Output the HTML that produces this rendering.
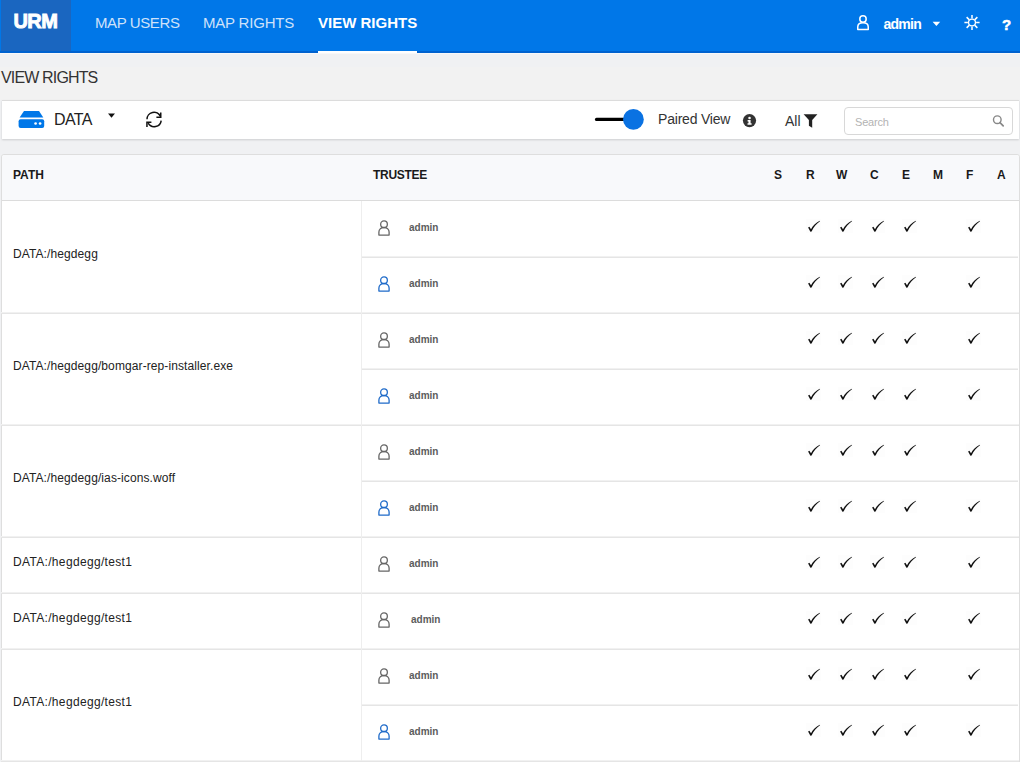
<!DOCTYPE html>
<html><head><meta charset="utf-8">
<style>
*{box-sizing:border-box;margin:0;padding:0}
html,body{width:1020px;height:762px;overflow:hidden;background:#f0f1f3;font-family:"Liberation Sans",sans-serif;position:relative}
.a{position:absolute;white-space:nowrap}
svg.a{overflow:visible}
#hdr{position:absolute;left:0;top:0;width:1020px;height:53px;background:#0077e8;border-bottom:2px solid #0062cf}
#logo{position:absolute;left:1px;top:0;width:70px;height:51px;background:#1a66c0}
.nav{font-size:15px;line-height:15px;color:#cfe2fa;letter-spacing:-0.4px}
.navA{font-size:15px;line-height:15px;color:#fff;font-weight:700}
#toolbar{position:absolute;left:2px;top:100px;width:1017px;height:39px;background:#fff;border-top:1px solid #dcdcdc;box-shadow:0 1px 2px rgba(0,0,0,0.15)}
#table{position:absolute;left:1px;top:154px;width:1019px;height:620px;background:#fff;border:1px solid #dedede;border-radius:3px}
#thead{position:absolute;left:0;top:0;width:1017px;height:46px;background:#f8f9fb;border-bottom:1px solid #dcdcdc;border-radius:3px 3px 0 0}
.th{font-size:12px;line-height:12px;font-weight:700;color:#1a1a1a}
.path{font-size:12px;line-height:12px;color:#222;letter-spacing:0.1px}
.adm{font-size:10px;line-height:10px;font-weight:700;color:#5c5c5c}
.hl{position:absolute;height:2px;margin-top:-1px;background:linear-gradient(#f1f1f1 50%,#e5e5e5 50%)}
.vl{position:absolute;width:1px;background:#eeeeee}
</style></head><body>
<div class="a" style="left:0;top:67px;width:1020px;height:33px;background:#f2f2f2"></div>
<div class="a" style="left:0;top:53px;width:1020px;height:1px;background:#f8f8f9"></div>
<div id="hdr"></div>
<div id="logo"></div>
<div class="a" style="left:13.5px;top:11px;font-size:20px;line-height:20px;font-weight:700;color:#fff;-webkit-text-stroke:0.9px #fff;letter-spacing:-0.6px">URM</div>
<div class="a nav" style="left:95px;top:15px;font-size:15px;letter-spacing:-0.4px">MAP USERS</div>
<div class="a nav" style="left:203px;top:15px;font-size:15px;letter-spacing:-0.2px">MAP RIGHTS</div>
<div class="a navA" style="left:318px;top:15px">VIEW RIGHTS</div>
<div class="a" style="left:318px;top:51px;width:99px;height:2px;background:#fff"></div>

<svg class="a" style="left:855px;top:13px" width="16" height="19" viewBox="0 0 16 19">
 <circle cx="8" cy="6" r="3.2" fill="none" stroke="#fff" stroke-width="1.5"/>
 <path d="M2.75,16.5 V14 C2.75,11.4 5,9.85 8,9.85 C11,9.85 13.25,11.4 13.25,14 V16.5 Z" fill="none" stroke="#fff" stroke-width="1.5" stroke-linejoin="round"/>
</svg>
<div class="a" style="left:883.5px;top:17px;font-size:14px;line-height:14px;font-weight:700;color:#fff;letter-spacing:-0.75px">admin</div>
<svg class="a" style="left:932px;top:21px" width="9" height="6" viewBox="0 0 9 6"><path d="M0.6,0.8 H8.2 L4.4,4.9 Z" fill="#fff"/></svg>
<svg class="a" style="left:962px;top:13px" width="20" height="20" viewBox="0 0 20 20">
 <circle cx="10" cy="9.5" r="3.45" fill="none" stroke="#fff" stroke-width="1.3"/>
 <g stroke="#fff" stroke-width="1.5" stroke-linecap="butt">
  <path d="M10,1.9 V5.4 M10,13.6 V17.1 M2.4,9.5 H5.9 M14.1,9.5 H17.6 M4.63,4.13 L7.1,6.6 M12.9,12.4 L15.37,14.87 M4.63,14.87 L7.1,12.4 M12.9,6.6 L15.37,4.13"/>
 </g>
</svg>
<div class="a" style="left:1002px;top:16.5px;font-size:15px;line-height:15px;font-weight:700;color:#fff;-webkit-text-stroke:0.5px #fff">?</div>

<div class="a" style="left:1px;top:69.5px;font-size:16px;line-height:16px;color:#333;letter-spacing:-0.85px">VIEW RIGHTS</div>

<div id="toolbar"></div>
<svg class="a" style="left:18px;top:110px" width="28" height="19" viewBox="0 0 28 19">
 <path d="M6,0.9 H21 L25.3,7.6 H1.6 Z" fill="#0077e8"/>
 <rect x="0.6" y="9.2" width="25.6" height="8.7" rx="2" fill="#0077e8"/>
 <circle cx="17.6" cy="13.5" r="1.35" fill="#fff"/>
 <circle cx="22.1" cy="13.5" r="1.35" fill="#fff"/>
</svg>
<div class="a" style="left:54px;top:112px;font-size:16px;line-height:16px;color:#222;letter-spacing:-0.65px">DATA</div>
<svg class="a" style="left:107px;top:113px" width="9" height="6" viewBox="0 0 9 6"><path d="M1,0.5 H8 L4.5,4.7 Z" fill="#111"/></svg>
<svg class="a" style="left:144px;top:110px" width="20" height="20" viewBox="0 0 20 20">
 <g fill="none" stroke="#111" stroke-width="1.5">
  <path d="M3,9.3 A7,7 0 0 1 16.4,6.4"/>
  <path d="M17.2,10.6 A7,7 0 0 1 4.2,13.2"/>
 </g>
 <path d="M16,2.5 H17.5 V8 H12.4 V6.6 H16 Z" fill="#111"/>
 <path d="M2.2,11.5 H7.4 V12.9 H3.7 V17 H2.2 Z" fill="#111"/>
</svg>

<svg class="a" style="left:590px;top:105px" width="60" height="30" viewBox="0 0 60 30">
 <path d="M6.5,14.4 H35" stroke="#000" stroke-width="3.2" stroke-linecap="round"/>
 <circle cx="43.4" cy="14.4" r="10.4" fill="#0a72e2"/>
</svg>
<div class="a" style="left:658px;top:112px;font-size:14px;line-height:14px;color:#333;letter-spacing:-0.2px">Paired View</div>
<svg class="a" style="left:742px;top:113px" width="15" height="15" viewBox="0 0 15 15">
 <circle cx="7.5" cy="7.6" r="6.6" fill="#333"/>
 <circle cx="7.55" cy="5.0" r="1.3" fill="#fff"/>
 <path d="M5.6,7.1 H8.6 V10.3 H9.6 V11.8 H5.5 V10.3 H6.5 V8.4 H5.6 Z" fill="#fff"/>
</svg>
<div class="a" style="left:785px;top:114px;font-size:14px;line-height:14px;color:#333">All</div>
<svg class="a" style="left:802px;top:113px" width="17" height="16" viewBox="0 0 17 16">
 <path d="M1.6,1.2 H15.4 L10.2,6.9 V14.7 L6.9,12.7 V6.9 Z" fill="#222"/>
</svg>
<div class="a" style="left:844px;top:107px;width:169px;height:28px;border:1px solid #d8d8d8;border-radius:4px;background:#fff"></div>
<div class="a" style="left:855px;top:117px;font-size:11px;line-height:11px;color:#b3b3b3;letter-spacing:-0.2px">Search</div>
<svg class="a" style="left:990px;top:113px" width="16" height="16" viewBox="0 0 16 16">
 <circle cx="7.3" cy="6.7" r="3.8" fill="none" stroke="#888" stroke-width="1.4"/>
 <path d="M10,9.6 L13.2,12.8" stroke="#888" stroke-width="1.7" stroke-linecap="round"/>
</svg>

<div id="table">
  <div id="thead"></div>
</div>
<div class="a th" style="left:13px;top:169px">PATH</div>
<div class="a th" style="left:373px;top:169px;letter-spacing:-0.3px">TRUSTEE</div>
<div class="a th" style="left:774px;top:169px">S</div>
<div class="a th" style="left:806px;top:169px">R</div>
<div class="a th" style="left:836px;top:169px">W</div>
<div class="a th" style="left:870px;top:169px">C</div>
<div class="a th" style="left:902px;top:169px">E</div>
<div class="a th" style="left:933px;top:169px">M</div>
<div class="a th" style="left:966px;top:169px">F</div>
<div class="a th" style="left:997px;top:169px">A</div>

<div class="a path" style="left:13px;top:248px">DATA:/hegdegg</div>
<svg class="a" style="left:377px;top:219px" width="14" height="18" viewBox="0 0 14 18"><circle cx="7" cy="5.3" r="3.35" fill="none" stroke="#666" stroke-width="1.3"/><path d="M1.9,16.1 V13.1 C1.9,10.4 4.2,8.5 7,8.5 C9.8,8.5 12.1,10.4 12.1,13.1 V16.1 Z" fill="none" stroke="#666" stroke-width="1.3" stroke-linejoin="round"/></svg>
<div class="a adm" style="left:409px;top:223px">admin</div>
<svg class="a" style="left:804.0px;top:217.3px" width="20" height="19" viewBox="0 0 20 19"><rect x="2" y="2" width="15" height="14" fill="#fdfdfd"/><path d="M4.1,10.4 L5.4,9.7 L7.0,12.3 C8.6,8.8 11.8,5.6 15.7,3.7 L16.0,4.3 C12.7,6.5 9.6,10.0 7.6,14.5 L6.4,14.7 Z" fill="#111"/></svg>
<svg class="a" style="left:836.0px;top:217.3px" width="20" height="19" viewBox="0 0 20 19"><rect x="2" y="2" width="15" height="14" fill="#fdfdfd"/><path d="M4.1,10.4 L5.4,9.7 L7.0,12.3 C8.6,8.8 11.8,5.6 15.7,3.7 L16.0,4.3 C12.7,6.5 9.6,10.0 7.6,14.5 L6.4,14.7 Z" fill="#111"/></svg>
<svg class="a" style="left:868.0px;top:217.3px" width="20" height="19" viewBox="0 0 20 19"><rect x="2" y="2" width="15" height="14" fill="#fdfdfd"/><path d="M4.1,10.4 L5.4,9.7 L7.0,12.3 C8.6,8.8 11.8,5.6 15.7,3.7 L16.0,4.3 C12.7,6.5 9.6,10.0 7.6,14.5 L6.4,14.7 Z" fill="#111"/></svg>
<svg class="a" style="left:900.0px;top:217.3px" width="20" height="19" viewBox="0 0 20 19"><rect x="2" y="2" width="15" height="14" fill="#fdfdfd"/><path d="M4.1,10.4 L5.4,9.7 L7.0,12.3 C8.6,8.8 11.8,5.6 15.7,3.7 L16.0,4.3 C12.7,6.5 9.6,10.0 7.6,14.5 L6.4,14.7 Z" fill="#111"/></svg>
<svg class="a" style="left:964.0px;top:217.3px" width="20" height="19" viewBox="0 0 20 19"><rect x="2" y="2" width="15" height="14" fill="#fdfdfd"/><path d="M4.1,10.4 L5.4,9.7 L7.0,12.3 C8.6,8.8 11.8,5.6 15.7,3.7 L16.0,4.3 C12.7,6.5 9.6,10.0 7.6,14.5 L6.4,14.7 Z" fill="#111"/></svg>
<div class="hl" style="left:362px;top:257px;width:656px"></div>
<svg class="a" style="left:377px;top:275px" width="14" height="18" viewBox="0 0 14 18"><circle cx="7" cy="5.3" r="3.35" fill="none" stroke="#1f6bc9" stroke-width="1.3"/><path d="M1.9,16.1 V13.1 C1.9,10.4 4.2,8.5 7,8.5 C9.8,8.5 12.1,10.4 12.1,13.1 V16.1 Z" fill="none" stroke="#1f6bc9" stroke-width="1.3" stroke-linejoin="round"/></svg>
<div class="a adm" style="left:409px;top:279px">admin</div>
<svg class="a" style="left:804.0px;top:273.3px" width="20" height="19" viewBox="0 0 20 19"><rect x="2" y="2" width="15" height="14" fill="#fdfdfd"/><path d="M4.1,10.4 L5.4,9.7 L7.0,12.3 C8.6,8.8 11.8,5.6 15.7,3.7 L16.0,4.3 C12.7,6.5 9.6,10.0 7.6,14.5 L6.4,14.7 Z" fill="#111"/></svg>
<svg class="a" style="left:836.0px;top:273.3px" width="20" height="19" viewBox="0 0 20 19"><rect x="2" y="2" width="15" height="14" fill="#fdfdfd"/><path d="M4.1,10.4 L5.4,9.7 L7.0,12.3 C8.6,8.8 11.8,5.6 15.7,3.7 L16.0,4.3 C12.7,6.5 9.6,10.0 7.6,14.5 L6.4,14.7 Z" fill="#111"/></svg>
<svg class="a" style="left:868.0px;top:273.3px" width="20" height="19" viewBox="0 0 20 19"><rect x="2" y="2" width="15" height="14" fill="#fdfdfd"/><path d="M4.1,10.4 L5.4,9.7 L7.0,12.3 C8.6,8.8 11.8,5.6 15.7,3.7 L16.0,4.3 C12.7,6.5 9.6,10.0 7.6,14.5 L6.4,14.7 Z" fill="#111"/></svg>
<svg class="a" style="left:900.0px;top:273.3px" width="20" height="19" viewBox="0 0 20 19"><rect x="2" y="2" width="15" height="14" fill="#fdfdfd"/><path d="M4.1,10.4 L5.4,9.7 L7.0,12.3 C8.6,8.8 11.8,5.6 15.7,3.7 L16.0,4.3 C12.7,6.5 9.6,10.0 7.6,14.5 L6.4,14.7 Z" fill="#111"/></svg>
<svg class="a" style="left:964.0px;top:273.3px" width="20" height="19" viewBox="0 0 20 19"><rect x="2" y="2" width="15" height="14" fill="#fdfdfd"/><path d="M4.1,10.4 L5.4,9.7 L7.0,12.3 C8.6,8.8 11.8,5.6 15.7,3.7 L16.0,4.3 C12.7,6.5 9.6,10.0 7.6,14.5 L6.4,14.7 Z" fill="#111"/></svg>
<div class="hl" style="left:1px;top:313px;width:1018px"></div>
<div class="vl" style="left:361px;top:201px;height:112px"></div>
<div class="a path" style="left:13px;top:360px">DATA:/hegdegg/bomgar-rep-installer.exe</div>
<svg class="a" style="left:377px;top:331px" width="14" height="18" viewBox="0 0 14 18"><circle cx="7" cy="5.3" r="3.35" fill="none" stroke="#666" stroke-width="1.3"/><path d="M1.9,16.1 V13.1 C1.9,10.4 4.2,8.5 7,8.5 C9.8,8.5 12.1,10.4 12.1,13.1 V16.1 Z" fill="none" stroke="#666" stroke-width="1.3" stroke-linejoin="round"/></svg>
<div class="a adm" style="left:409px;top:335px">admin</div>
<svg class="a" style="left:804.0px;top:329.3px" width="20" height="19" viewBox="0 0 20 19"><rect x="2" y="2" width="15" height="14" fill="#fdfdfd"/><path d="M4.1,10.4 L5.4,9.7 L7.0,12.3 C8.6,8.8 11.8,5.6 15.7,3.7 L16.0,4.3 C12.7,6.5 9.6,10.0 7.6,14.5 L6.4,14.7 Z" fill="#111"/></svg>
<svg class="a" style="left:836.0px;top:329.3px" width="20" height="19" viewBox="0 0 20 19"><rect x="2" y="2" width="15" height="14" fill="#fdfdfd"/><path d="M4.1,10.4 L5.4,9.7 L7.0,12.3 C8.6,8.8 11.8,5.6 15.7,3.7 L16.0,4.3 C12.7,6.5 9.6,10.0 7.6,14.5 L6.4,14.7 Z" fill="#111"/></svg>
<svg class="a" style="left:868.0px;top:329.3px" width="20" height="19" viewBox="0 0 20 19"><rect x="2" y="2" width="15" height="14" fill="#fdfdfd"/><path d="M4.1,10.4 L5.4,9.7 L7.0,12.3 C8.6,8.8 11.8,5.6 15.7,3.7 L16.0,4.3 C12.7,6.5 9.6,10.0 7.6,14.5 L6.4,14.7 Z" fill="#111"/></svg>
<svg class="a" style="left:900.0px;top:329.3px" width="20" height="19" viewBox="0 0 20 19"><rect x="2" y="2" width="15" height="14" fill="#fdfdfd"/><path d="M4.1,10.4 L5.4,9.7 L7.0,12.3 C8.6,8.8 11.8,5.6 15.7,3.7 L16.0,4.3 C12.7,6.5 9.6,10.0 7.6,14.5 L6.4,14.7 Z" fill="#111"/></svg>
<svg class="a" style="left:964.0px;top:329.3px" width="20" height="19" viewBox="0 0 20 19"><rect x="2" y="2" width="15" height="14" fill="#fdfdfd"/><path d="M4.1,10.4 L5.4,9.7 L7.0,12.3 C8.6,8.8 11.8,5.6 15.7,3.7 L16.0,4.3 C12.7,6.5 9.6,10.0 7.6,14.5 L6.4,14.7 Z" fill="#111"/></svg>
<div class="hl" style="left:362px;top:369px;width:656px"></div>
<svg class="a" style="left:377px;top:387px" width="14" height="18" viewBox="0 0 14 18"><circle cx="7" cy="5.3" r="3.35" fill="none" stroke="#1f6bc9" stroke-width="1.3"/><path d="M1.9,16.1 V13.1 C1.9,10.4 4.2,8.5 7,8.5 C9.8,8.5 12.1,10.4 12.1,13.1 V16.1 Z" fill="none" stroke="#1f6bc9" stroke-width="1.3" stroke-linejoin="round"/></svg>
<div class="a adm" style="left:409px;top:391px">admin</div>
<svg class="a" style="left:804.0px;top:385.3px" width="20" height="19" viewBox="0 0 20 19"><rect x="2" y="2" width="15" height="14" fill="#fdfdfd"/><path d="M4.1,10.4 L5.4,9.7 L7.0,12.3 C8.6,8.8 11.8,5.6 15.7,3.7 L16.0,4.3 C12.7,6.5 9.6,10.0 7.6,14.5 L6.4,14.7 Z" fill="#111"/></svg>
<svg class="a" style="left:836.0px;top:385.3px" width="20" height="19" viewBox="0 0 20 19"><rect x="2" y="2" width="15" height="14" fill="#fdfdfd"/><path d="M4.1,10.4 L5.4,9.7 L7.0,12.3 C8.6,8.8 11.8,5.6 15.7,3.7 L16.0,4.3 C12.7,6.5 9.6,10.0 7.6,14.5 L6.4,14.7 Z" fill="#111"/></svg>
<svg class="a" style="left:868.0px;top:385.3px" width="20" height="19" viewBox="0 0 20 19"><rect x="2" y="2" width="15" height="14" fill="#fdfdfd"/><path d="M4.1,10.4 L5.4,9.7 L7.0,12.3 C8.6,8.8 11.8,5.6 15.7,3.7 L16.0,4.3 C12.7,6.5 9.6,10.0 7.6,14.5 L6.4,14.7 Z" fill="#111"/></svg>
<svg class="a" style="left:900.0px;top:385.3px" width="20" height="19" viewBox="0 0 20 19"><rect x="2" y="2" width="15" height="14" fill="#fdfdfd"/><path d="M4.1,10.4 L5.4,9.7 L7.0,12.3 C8.6,8.8 11.8,5.6 15.7,3.7 L16.0,4.3 C12.7,6.5 9.6,10.0 7.6,14.5 L6.4,14.7 Z" fill="#111"/></svg>
<svg class="a" style="left:964.0px;top:385.3px" width="20" height="19" viewBox="0 0 20 19"><rect x="2" y="2" width="15" height="14" fill="#fdfdfd"/><path d="M4.1,10.4 L5.4,9.7 L7.0,12.3 C8.6,8.8 11.8,5.6 15.7,3.7 L16.0,4.3 C12.7,6.5 9.6,10.0 7.6,14.5 L6.4,14.7 Z" fill="#111"/></svg>
<div class="hl" style="left:1px;top:425px;width:1018px"></div>
<div class="vl" style="left:361px;top:313px;height:112px"></div>
<div class="a path" style="left:13px;top:472px;letter-spacing:0.1px">DATA:/hegdegg/ias-icons.woff</div>
<svg class="a" style="left:377px;top:443px" width="14" height="18" viewBox="0 0 14 18"><circle cx="7" cy="5.3" r="3.35" fill="none" stroke="#666" stroke-width="1.3"/><path d="M1.9,16.1 V13.1 C1.9,10.4 4.2,8.5 7,8.5 C9.8,8.5 12.1,10.4 12.1,13.1 V16.1 Z" fill="none" stroke="#666" stroke-width="1.3" stroke-linejoin="round"/></svg>
<div class="a adm" style="left:409px;top:447px">admin</div>
<svg class="a" style="left:804.0px;top:441.3px" width="20" height="19" viewBox="0 0 20 19"><rect x="2" y="2" width="15" height="14" fill="#fdfdfd"/><path d="M4.1,10.4 L5.4,9.7 L7.0,12.3 C8.6,8.8 11.8,5.6 15.7,3.7 L16.0,4.3 C12.7,6.5 9.6,10.0 7.6,14.5 L6.4,14.7 Z" fill="#111"/></svg>
<svg class="a" style="left:836.0px;top:441.3px" width="20" height="19" viewBox="0 0 20 19"><rect x="2" y="2" width="15" height="14" fill="#fdfdfd"/><path d="M4.1,10.4 L5.4,9.7 L7.0,12.3 C8.6,8.8 11.8,5.6 15.7,3.7 L16.0,4.3 C12.7,6.5 9.6,10.0 7.6,14.5 L6.4,14.7 Z" fill="#111"/></svg>
<svg class="a" style="left:868.0px;top:441.3px" width="20" height="19" viewBox="0 0 20 19"><rect x="2" y="2" width="15" height="14" fill="#fdfdfd"/><path d="M4.1,10.4 L5.4,9.7 L7.0,12.3 C8.6,8.8 11.8,5.6 15.7,3.7 L16.0,4.3 C12.7,6.5 9.6,10.0 7.6,14.5 L6.4,14.7 Z" fill="#111"/></svg>
<svg class="a" style="left:900.0px;top:441.3px" width="20" height="19" viewBox="0 0 20 19"><rect x="2" y="2" width="15" height="14" fill="#fdfdfd"/><path d="M4.1,10.4 L5.4,9.7 L7.0,12.3 C8.6,8.8 11.8,5.6 15.7,3.7 L16.0,4.3 C12.7,6.5 9.6,10.0 7.6,14.5 L6.4,14.7 Z" fill="#111"/></svg>
<svg class="a" style="left:964.0px;top:441.3px" width="20" height="19" viewBox="0 0 20 19"><rect x="2" y="2" width="15" height="14" fill="#fdfdfd"/><path d="M4.1,10.4 L5.4,9.7 L7.0,12.3 C8.6,8.8 11.8,5.6 15.7,3.7 L16.0,4.3 C12.7,6.5 9.6,10.0 7.6,14.5 L6.4,14.7 Z" fill="#111"/></svg>
<div class="hl" style="left:362px;top:481px;width:656px"></div>
<svg class="a" style="left:377px;top:499px" width="14" height="18" viewBox="0 0 14 18"><circle cx="7" cy="5.3" r="3.35" fill="none" stroke="#1f6bc9" stroke-width="1.3"/><path d="M1.9,16.1 V13.1 C1.9,10.4 4.2,8.5 7,8.5 C9.8,8.5 12.1,10.4 12.1,13.1 V16.1 Z" fill="none" stroke="#1f6bc9" stroke-width="1.3" stroke-linejoin="round"/></svg>
<div class="a adm" style="left:409px;top:503px">admin</div>
<svg class="a" style="left:804.0px;top:497.3px" width="20" height="19" viewBox="0 0 20 19"><rect x="2" y="2" width="15" height="14" fill="#fdfdfd"/><path d="M4.1,10.4 L5.4,9.7 L7.0,12.3 C8.6,8.8 11.8,5.6 15.7,3.7 L16.0,4.3 C12.7,6.5 9.6,10.0 7.6,14.5 L6.4,14.7 Z" fill="#111"/></svg>
<svg class="a" style="left:836.0px;top:497.3px" width="20" height="19" viewBox="0 0 20 19"><rect x="2" y="2" width="15" height="14" fill="#fdfdfd"/><path d="M4.1,10.4 L5.4,9.7 L7.0,12.3 C8.6,8.8 11.8,5.6 15.7,3.7 L16.0,4.3 C12.7,6.5 9.6,10.0 7.6,14.5 L6.4,14.7 Z" fill="#111"/></svg>
<svg class="a" style="left:868.0px;top:497.3px" width="20" height="19" viewBox="0 0 20 19"><rect x="2" y="2" width="15" height="14" fill="#fdfdfd"/><path d="M4.1,10.4 L5.4,9.7 L7.0,12.3 C8.6,8.8 11.8,5.6 15.7,3.7 L16.0,4.3 C12.7,6.5 9.6,10.0 7.6,14.5 L6.4,14.7 Z" fill="#111"/></svg>
<svg class="a" style="left:900.0px;top:497.3px" width="20" height="19" viewBox="0 0 20 19"><rect x="2" y="2" width="15" height="14" fill="#fdfdfd"/><path d="M4.1,10.4 L5.4,9.7 L7.0,12.3 C8.6,8.8 11.8,5.6 15.7,3.7 L16.0,4.3 C12.7,6.5 9.6,10.0 7.6,14.5 L6.4,14.7 Z" fill="#111"/></svg>
<svg class="a" style="left:964.0px;top:497.3px" width="20" height="19" viewBox="0 0 20 19"><rect x="2" y="2" width="15" height="14" fill="#fdfdfd"/><path d="M4.1,10.4 L5.4,9.7 L7.0,12.3 C8.6,8.8 11.8,5.6 15.7,3.7 L16.0,4.3 C12.7,6.5 9.6,10.0 7.6,14.5 L6.4,14.7 Z" fill="#111"/></svg>
<div class="hl" style="left:1px;top:537px;width:1018px"></div>
<div class="vl" style="left:361px;top:425px;height:112px"></div>
<div class="a path" style="left:13px;top:556px;letter-spacing:0.33px">DATA:/hegdegg/test1</div>
<svg class="a" style="left:377px;top:555px" width="14" height="18" viewBox="0 0 14 18"><circle cx="7" cy="5.3" r="3.35" fill="none" stroke="#666" stroke-width="1.3"/><path d="M1.9,16.1 V13.1 C1.9,10.4 4.2,8.5 7,8.5 C9.8,8.5 12.1,10.4 12.1,13.1 V16.1 Z" fill="none" stroke="#666" stroke-width="1.3" stroke-linejoin="round"/></svg>
<div class="a adm" style="left:409px;top:559px">admin</div>
<svg class="a" style="left:804.0px;top:553.3px" width="20" height="19" viewBox="0 0 20 19"><rect x="2" y="2" width="15" height="14" fill="#fdfdfd"/><path d="M4.1,10.4 L5.4,9.7 L7.0,12.3 C8.6,8.8 11.8,5.6 15.7,3.7 L16.0,4.3 C12.7,6.5 9.6,10.0 7.6,14.5 L6.4,14.7 Z" fill="#111"/></svg>
<svg class="a" style="left:836.0px;top:553.3px" width="20" height="19" viewBox="0 0 20 19"><rect x="2" y="2" width="15" height="14" fill="#fdfdfd"/><path d="M4.1,10.4 L5.4,9.7 L7.0,12.3 C8.6,8.8 11.8,5.6 15.7,3.7 L16.0,4.3 C12.7,6.5 9.6,10.0 7.6,14.5 L6.4,14.7 Z" fill="#111"/></svg>
<svg class="a" style="left:868.0px;top:553.3px" width="20" height="19" viewBox="0 0 20 19"><rect x="2" y="2" width="15" height="14" fill="#fdfdfd"/><path d="M4.1,10.4 L5.4,9.7 L7.0,12.3 C8.6,8.8 11.8,5.6 15.7,3.7 L16.0,4.3 C12.7,6.5 9.6,10.0 7.6,14.5 L6.4,14.7 Z" fill="#111"/></svg>
<svg class="a" style="left:900.0px;top:553.3px" width="20" height="19" viewBox="0 0 20 19"><rect x="2" y="2" width="15" height="14" fill="#fdfdfd"/><path d="M4.1,10.4 L5.4,9.7 L7.0,12.3 C8.6,8.8 11.8,5.6 15.7,3.7 L16.0,4.3 C12.7,6.5 9.6,10.0 7.6,14.5 L6.4,14.7 Z" fill="#111"/></svg>
<svg class="a" style="left:964.0px;top:553.3px" width="20" height="19" viewBox="0 0 20 19"><rect x="2" y="2" width="15" height="14" fill="#fdfdfd"/><path d="M4.1,10.4 L5.4,9.7 L7.0,12.3 C8.6,8.8 11.8,5.6 15.7,3.7 L16.0,4.3 C12.7,6.5 9.6,10.0 7.6,14.5 L6.4,14.7 Z" fill="#111"/></svg>
<div class="hl" style="left:1px;top:593px;width:1018px"></div>
<div class="vl" style="left:361px;top:537px;height:56px"></div>
<div class="a path" style="left:13px;top:612px;letter-spacing:0.33px">DATA:/hegdegg/test1</div>
<svg class="a" style="left:377px;top:611px" width="14" height="18" viewBox="0 0 14 18"><circle cx="7" cy="5.3" r="3.35" fill="none" stroke="#666" stroke-width="1.3"/><path d="M1.9,16.1 V13.1 C1.9,10.4 4.2,8.5 7,8.5 C9.8,8.5 12.1,10.4 12.1,13.1 V16.1 Z" fill="none" stroke="#666" stroke-width="1.3" stroke-linejoin="round"/></svg>
<div class="a adm" style="left:411px;top:615px">admin</div>
<svg class="a" style="left:804.0px;top:609.3px" width="20" height="19" viewBox="0 0 20 19"><rect x="2" y="2" width="15" height="14" fill="#fdfdfd"/><path d="M4.1,10.4 L5.4,9.7 L7.0,12.3 C8.6,8.8 11.8,5.6 15.7,3.7 L16.0,4.3 C12.7,6.5 9.6,10.0 7.6,14.5 L6.4,14.7 Z" fill="#111"/></svg>
<svg class="a" style="left:836.0px;top:609.3px" width="20" height="19" viewBox="0 0 20 19"><rect x="2" y="2" width="15" height="14" fill="#fdfdfd"/><path d="M4.1,10.4 L5.4,9.7 L7.0,12.3 C8.6,8.8 11.8,5.6 15.7,3.7 L16.0,4.3 C12.7,6.5 9.6,10.0 7.6,14.5 L6.4,14.7 Z" fill="#111"/></svg>
<svg class="a" style="left:868.0px;top:609.3px" width="20" height="19" viewBox="0 0 20 19"><rect x="2" y="2" width="15" height="14" fill="#fdfdfd"/><path d="M4.1,10.4 L5.4,9.7 L7.0,12.3 C8.6,8.8 11.8,5.6 15.7,3.7 L16.0,4.3 C12.7,6.5 9.6,10.0 7.6,14.5 L6.4,14.7 Z" fill="#111"/></svg>
<svg class="a" style="left:900.0px;top:609.3px" width="20" height="19" viewBox="0 0 20 19"><rect x="2" y="2" width="15" height="14" fill="#fdfdfd"/><path d="M4.1,10.4 L5.4,9.7 L7.0,12.3 C8.6,8.8 11.8,5.6 15.7,3.7 L16.0,4.3 C12.7,6.5 9.6,10.0 7.6,14.5 L6.4,14.7 Z" fill="#111"/></svg>
<svg class="a" style="left:964.0px;top:609.3px" width="20" height="19" viewBox="0 0 20 19"><rect x="2" y="2" width="15" height="14" fill="#fdfdfd"/><path d="M4.1,10.4 L5.4,9.7 L7.0,12.3 C8.6,8.8 11.8,5.6 15.7,3.7 L16.0,4.3 C12.7,6.5 9.6,10.0 7.6,14.5 L6.4,14.7 Z" fill="#111"/></svg>
<div class="hl" style="left:1px;top:649px;width:1018px"></div>
<div class="vl" style="left:361px;top:593px;height:56px"></div>
<div class="a path" style="left:13px;top:696px;letter-spacing:0.33px">DATA:/hegdegg/test1</div>
<svg class="a" style="left:377px;top:667px" width="14" height="18" viewBox="0 0 14 18"><circle cx="7" cy="5.3" r="3.35" fill="none" stroke="#666" stroke-width="1.3"/><path d="M1.9,16.1 V13.1 C1.9,10.4 4.2,8.5 7,8.5 C9.8,8.5 12.1,10.4 12.1,13.1 V16.1 Z" fill="none" stroke="#666" stroke-width="1.3" stroke-linejoin="round"/></svg>
<div class="a adm" style="left:409px;top:671px">admin</div>
<svg class="a" style="left:804.0px;top:665.3px" width="20" height="19" viewBox="0 0 20 19"><rect x="2" y="2" width="15" height="14" fill="#fdfdfd"/><path d="M4.1,10.4 L5.4,9.7 L7.0,12.3 C8.6,8.8 11.8,5.6 15.7,3.7 L16.0,4.3 C12.7,6.5 9.6,10.0 7.6,14.5 L6.4,14.7 Z" fill="#111"/></svg>
<svg class="a" style="left:836.0px;top:665.3px" width="20" height="19" viewBox="0 0 20 19"><rect x="2" y="2" width="15" height="14" fill="#fdfdfd"/><path d="M4.1,10.4 L5.4,9.7 L7.0,12.3 C8.6,8.8 11.8,5.6 15.7,3.7 L16.0,4.3 C12.7,6.5 9.6,10.0 7.6,14.5 L6.4,14.7 Z" fill="#111"/></svg>
<svg class="a" style="left:868.0px;top:665.3px" width="20" height="19" viewBox="0 0 20 19"><rect x="2" y="2" width="15" height="14" fill="#fdfdfd"/><path d="M4.1,10.4 L5.4,9.7 L7.0,12.3 C8.6,8.8 11.8,5.6 15.7,3.7 L16.0,4.3 C12.7,6.5 9.6,10.0 7.6,14.5 L6.4,14.7 Z" fill="#111"/></svg>
<svg class="a" style="left:900.0px;top:665.3px" width="20" height="19" viewBox="0 0 20 19"><rect x="2" y="2" width="15" height="14" fill="#fdfdfd"/><path d="M4.1,10.4 L5.4,9.7 L7.0,12.3 C8.6,8.8 11.8,5.6 15.7,3.7 L16.0,4.3 C12.7,6.5 9.6,10.0 7.6,14.5 L6.4,14.7 Z" fill="#111"/></svg>
<svg class="a" style="left:964.0px;top:665.3px" width="20" height="19" viewBox="0 0 20 19"><rect x="2" y="2" width="15" height="14" fill="#fdfdfd"/><path d="M4.1,10.4 L5.4,9.7 L7.0,12.3 C8.6,8.8 11.8,5.6 15.7,3.7 L16.0,4.3 C12.7,6.5 9.6,10.0 7.6,14.5 L6.4,14.7 Z" fill="#111"/></svg>
<div class="hl" style="left:362px;top:705px;width:656px"></div>
<svg class="a" style="left:377px;top:723px" width="14" height="18" viewBox="0 0 14 18"><circle cx="7" cy="5.3" r="3.35" fill="none" stroke="#1f6bc9" stroke-width="1.3"/><path d="M1.9,16.1 V13.1 C1.9,10.4 4.2,8.5 7,8.5 C9.8,8.5 12.1,10.4 12.1,13.1 V16.1 Z" fill="none" stroke="#1f6bc9" stroke-width="1.3" stroke-linejoin="round"/></svg>
<div class="a adm" style="left:409px;top:727px">admin</div>
<svg class="a" style="left:804.0px;top:721.3px" width="20" height="19" viewBox="0 0 20 19"><rect x="2" y="2" width="15" height="14" fill="#fdfdfd"/><path d="M4.1,10.4 L5.4,9.7 L7.0,12.3 C8.6,8.8 11.8,5.6 15.7,3.7 L16.0,4.3 C12.7,6.5 9.6,10.0 7.6,14.5 L6.4,14.7 Z" fill="#111"/></svg>
<svg class="a" style="left:836.0px;top:721.3px" width="20" height="19" viewBox="0 0 20 19"><rect x="2" y="2" width="15" height="14" fill="#fdfdfd"/><path d="M4.1,10.4 L5.4,9.7 L7.0,12.3 C8.6,8.8 11.8,5.6 15.7,3.7 L16.0,4.3 C12.7,6.5 9.6,10.0 7.6,14.5 L6.4,14.7 Z" fill="#111"/></svg>
<svg class="a" style="left:868.0px;top:721.3px" width="20" height="19" viewBox="0 0 20 19"><rect x="2" y="2" width="15" height="14" fill="#fdfdfd"/><path d="M4.1,10.4 L5.4,9.7 L7.0,12.3 C8.6,8.8 11.8,5.6 15.7,3.7 L16.0,4.3 C12.7,6.5 9.6,10.0 7.6,14.5 L6.4,14.7 Z" fill="#111"/></svg>
<svg class="a" style="left:900.0px;top:721.3px" width="20" height="19" viewBox="0 0 20 19"><rect x="2" y="2" width="15" height="14" fill="#fdfdfd"/><path d="M4.1,10.4 L5.4,9.7 L7.0,12.3 C8.6,8.8 11.8,5.6 15.7,3.7 L16.0,4.3 C12.7,6.5 9.6,10.0 7.6,14.5 L6.4,14.7 Z" fill="#111"/></svg>
<svg class="a" style="left:964.0px;top:721.3px" width="20" height="19" viewBox="0 0 20 19"><rect x="2" y="2" width="15" height="14" fill="#fdfdfd"/><path d="M4.1,10.4 L5.4,9.7 L7.0,12.3 C8.6,8.8 11.8,5.6 15.7,3.7 L16.0,4.3 C12.7,6.5 9.6,10.0 7.6,14.5 L6.4,14.7 Z" fill="#111"/></svg>
<div class="hl" style="left:1px;top:761px;width:1018px"></div>
<div class="vl" style="left:361px;top:649px;height:112px"></div>
</body></html>
